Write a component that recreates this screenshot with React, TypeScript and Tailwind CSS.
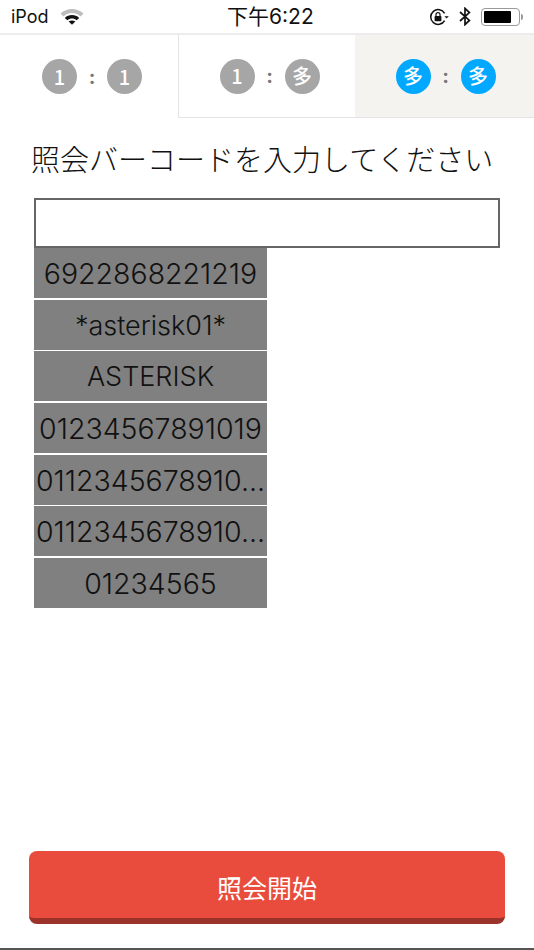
import React from 'react';

const cjk = '"Noto Sans CJK JP", "Noto Sans", sans-serif';

const codes = [
    '6922868221219',
    '*asterisk01*',
    'ASTERISK',
    '01234567891019',
    '0112345678910...',
    '0112345678910...',
    '01234565',
];

const Dot: React.FC<{ label: string; active?: boolean }> = ({ label, active }) => (
    <div
        className={`w-[35px] h-[35px] rounded-full flex items-center justify-center text-white text-[20px] leading-none font-medium ${active ? 'bg-[#00a8ff]' : 'bg-[#a6a6a6]'}`}
        style={{ fontFamily: cjk }}
    >
        {label}
    </div>
);

const Mode: React.FC<{ left: string; right: string; active?: boolean; className: string }> = ({ left, right, active, className }) => (
    <div className={`flex items-center justify-center gap-[10px] ${className}`}>
        <Dot label={left} active={active} />
        <span className="w-[10px] text-center text-[20px] leading-none font-bold text-[#777] font-['Inter']">:</span>
        <Dot label={right} active={active} />
    </div>
);

const StatusBar: React.FC = () => (
    <div className="relative h-[35px] flex items-center justify-between pl-[11px] pr-[11px] border-b-2 border-[#ececec] bg-white text-[#111]">
        <div className="flex items-center gap-[11px]">
            <span className="text-[18px] font-['Inter'] leading-none">iPod</span>
            <svg width="24" height="17" viewBox="0 0 24 17">
                <path d="M0.5 5.5C6.8 -0.6 17.2 -0.6 23.5 5.5L20.6 8.4C15.9 3.9 8.1 3.9 3.4 8.4Z" fill="#bdbdbd" />
                <path d="M4.8 9.9C8.8 6.1 15.2 6.1 19.2 9.9L16.6 12.3C14 9.9 10 9.9 7.4 12.3Z" fill="#111" />
                <path d="M8.6 13.6C10.5 12 13.5 12 15.4 13.6L12 16.8Z" fill="#111" />
            </svg>
        </div>
        <span
            className="absolute left-[227px] top-[3px] text-[21px] leading-[28px] text-[#111]"
            style={{ fontFamily: 'Inter, "Noto Sans CJK JP", sans-serif' }}
        >
            下午6:22
        </span>
        <div className="flex items-center gap-[10px]">
            <svg width="20" height="18" viewBox="0 0 20 18" fill="none">
                <path d="M15.6 12.6A7.4 7.4 0 1 1 15.6 5.4" stroke="#111" strokeWidth="1.5" />
                <path d="M17.6 8.2L19.8 10.4H15.4Z" fill="#111" transform="rotate(180 17.6 9.3)" />
                <rect x="5.6" y="8" width="6.8" height="5.2" rx="0.8" fill="#111" />
                <path d="M7 8.2V6.6a2 2 0 0 1 4 0V8.2" stroke="#111" strokeWidth="1.2" />
            </svg>
            <svg width="12" height="19" viewBox="0 0 12 19" fill="none">
                <path d="M1 5L10.4 13.4L6 17.6V1.4L10.4 5.6L1 14" stroke="#111" strokeWidth="1.7" />
            </svg>
            <div className="flex items-center gap-[1px]">
                <div className="w-[39px] h-[18px] rounded-[4px] border border-[#9a9a9a] p-[2px]">
                    <div className="w-[27px] h-full bg-black rounded-[1px]" />
                </div>
                <div className="w-[2px] h-[6px] bg-[#9a9a9a] rounded-r-full" />
            </div>
        </div>
    </div>
);

export default function App() {
    return (
        <div className="w-[534px] h-[950px] flex flex-col bg-white overflow-hidden">
            <StatusBar />

            {/* Mode tabs */}
            <div className="flex h-[83px]">
                <Mode left="1" right="1" className="w-[178px] pl-[6px]" />
                <Mode left="1" right="多" className="w-[177px] pl-[5px] border-l border-b border-[#e4e4e4]" />
                <Mode left="多" right="多" active className="flex-1 pl-[2px] bg-[#f4f3ef] border-b border-[#e4e4e4]" />
            </div>

            <div className="flex flex-col flex-1 pl-[32px]">
                <h1 className="-ml-[1px] mt-[22px] h-[36px] text-[29px] leading-[36px] font-light text-[#111] whitespace-nowrap" style={{ fontFamily: cjk }}>
                    照会バーコードを入力してください
                </h1>

                <input className="block mt-[22px] ml-[2px] w-[466px] h-[50px] bg-white border-2 border-[#666] outline-none" />

                <div className="ml-[2px] w-[233px] flex flex-col gap-[1.67px]">
                    {codes.map((code, i) => (
                        <div
                            key={i}
                            className={`h-[50px] bg-[#808080] text-center text-[#111] leading-[51px] font-['Inter'] font-light whitespace-nowrap ${/^[0-9.]+$/.test(code) ? 'text-[28.5px]' : 'text-[27px]'}`}
                        >
                            {code}
                        </div>
                    ))}
                </div>
            </div>

            <div className="px-[29px] pb-[24px]">
                <button
                    className="w-full h-[73px] rounded-[8px] bg-[#e94c3c] pt-[6px] border-b-[6px] border-[#9b332b] text-white text-[25px] leading-none"
                    style={{ fontFamily: cjk }}
                >
                    照会開始
                </button>
            </div>
            <div className="h-[2px] bg-[#555]" />
        </div>
    );
}
